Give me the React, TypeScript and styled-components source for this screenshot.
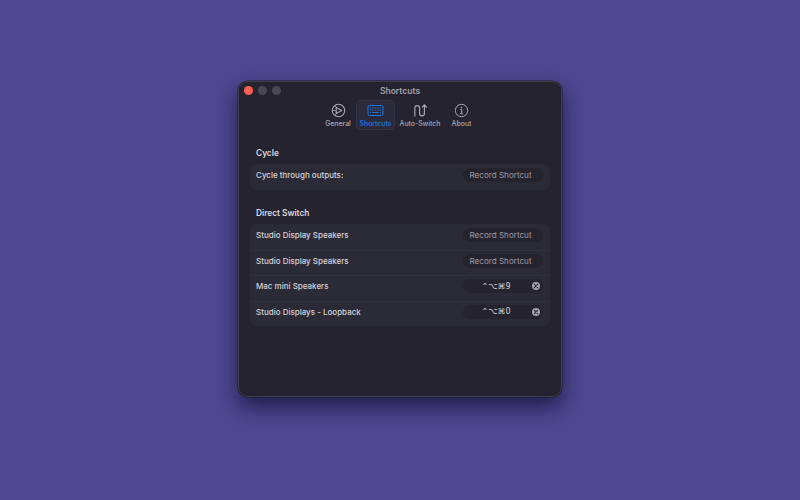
import React from "react";
import styled, { createGlobalStyle } from "styled-components";

const GlobalStyle = createGlobalStyle`
  html, body {
    margin: 0;
    padding: 0;
    height: 100%;
    background: #4e4890;
    font-family: "Inter", "Liberation Sans", sans-serif;
    -webkit-font-smoothing: antialiased;
  }
`;

const Desktop = styled.div`
  width: 800px;
  height: 500px;
  box-sizing: border-box;
  padding-top: 81px;
  display: flex;
  justify-content: center;
  align-items: flex-start;
  overflow: hidden;
`;

const Window = styled.div`
  width: 324px;
  height: 316px;
  box-sizing: border-box;
  border-radius: 10px;
  background: #24232f;
  border: 1px solid #3f3e49;
  box-shadow: 0 0 0 0.5px #1c1b26, 0 10px 22px rgba(20, 16, 60, 0.8);
  display: flex;
  flex-direction: column;
  overflow: hidden;
`;

const TitleBar = styled.div`
  position: relative;
  height: 18px;
  flex: none;
  display: flex;
  align-items: center;
  justify-content: center;
`;

const Lights = styled.div`
  position: absolute;
  left: 4.5px;
  top: 3.5px;
  display: flex;
  gap: 5px;
`;

const Light = styled.span<{ $color: string }>`
  width: 9px;
  height: 9px;
  border-radius: 50%;
  background: ${(p) => p.$color};
`;

const Title = styled.div`
  font-size: 8.5px;
  font-weight: 600;
  color: #a3a2aa;
`;

const Toolbar = styled.div`
  flex: none;
  height: 30px;
  padding-right: 2px;
  display: flex;
  justify-content: center;
`;

const Tab = styled.div<{ $active?: boolean; $w: number }>`
  width: ${(p) => p.$w}px;
  height: 30px;
  box-sizing: border-box;
  border-radius: 5px;
  padding-top: 3px;
  display: flex;
  flex-direction: column;
  align-items: center;
  gap: 0.5px;
  color: ${(p) => (p.$active ? "#1f78e0" : "#a8a7ae")};
  background: ${(p) => (p.$active ? "#2b2a3a" : "transparent")};
  box-shadow: ${(p) => (p.$active ? "inset 0 0 0 1px #353445" : "none")};
  svg {
    display: block;
  }
`;

const TabLabel = styled.span`
  font-size: 6.9px;
  font-weight: 500;
  line-height: 9px;
  white-space: nowrap;
`;

const Content = styled.div`
  padding: 0 11px;
  display: flex;
  flex-direction: column;
`;

const SectionTitle = styled.div<{ $top: number }>`
  margin-top: ${(p) => p.$top}px;
  padding-left: 6px;
  height: 22px;
  line-height: 22px;
  font-size: 8.3px;
  font-weight: 600;
  color: #dcdbe0;
`;

const Card = styled.div`
  background: #2b2a37;
  border-radius: 7px;
  display: flex;
  flex-direction: column;
`;

const Row = styled.div`
  height: 25.5px;
  box-sizing: border-box;
  padding: 0 7px 3.5px 6px;
  display: flex;
  align-items: center;
  justify-content: space-between;
  & + & {
    box-shadow: inset 0 1px 0 #32313e;
  }
`;

const RowLabel = styled.span`
  font-size: 8px;
  font-weight: 450;
  color: #d6d5da;
`;

const Pill = styled.div`
  position: relative;
  width: 80px;
  height: 14px;
  border-radius: 7px;
  background: #24232e;
  display: flex;
  align-items: center;
  justify-content: center;
`;

const PillText = styled.span<{ $keys?: boolean }>`
  font-size: ${(p) => (p.$keys ? "8px" : "8.1px")};
  color: ${(p) => (p.$keys ? "#d3d2d8" : "#9d9ca4")};
  font-family: ${(p) =>
    p.$keys ? '"DejaVu Sans", sans-serif' : '"Inter", sans-serif'};
  margin-right: ${(p) => (p.$keys ? "14px" : "5px")};
`;

const ClearButton = styled.span`
  position: absolute;
  right: 3px;
  top: 3px;
  width: 8px;
  height: 8px;
  border-radius: 50%;
  background: #a6a5ac;
  display: flex;
  align-items: center;
  justify-content: center;
`;

const GeneralIcon = () => (
  <svg width="15" height="15" viewBox="0 0 15 15" fill="none" stroke="currentColor" strokeWidth="1.1" strokeLinejoin="round">
    <circle cx="7.5" cy="7.5" r="6.2" />
    <path d="M5.2 4.6 L10.8 7.5 L5.2 10.4 Z" />
    <path d="M5.2 4.6 L4.2 2.4 M5.2 10.4 L4.2 12.6 M5.2 7.5 H1.6" strokeWidth="0.8" />
  </svg>
);

const KeyboardIcon = () => (
  <svg width="17" height="15" viewBox="0 0 17 15" fill="none" stroke="currentColor">
    <rect x="1" y="2.5" width="15" height="10" rx="1.5" strokeWidth="1" />
    <path d="M3 5h11M3 7.2h11" strokeWidth="1" strokeDasharray="1 .7" />
    <path d="M3 9.5h1M5.5 9.5h6M13 9.5h1" strokeWidth="1" />
  </svg>
);

const AutoSwitchIcon = () => (
  <svg width="15" height="15" viewBox="0 0 15 15" fill="none" stroke="currentColor" strokeWidth="1.2" strokeLinecap="round" strokeLinejoin="round">
    <path d="M1.8 13V5a2.4 2.4 0 0 1 4.8 0v5.4a2.4 2.4 0 0 0 4.8 0V2" />
    <path d="M9.4 4l2-2 2 2" />
  </svg>
);

const InfoIcon = () => (
  <svg width="15" height="15" viewBox="0 0 15 15" fill="none" stroke="currentColor" strokeWidth="1">
    <circle cx="7.5" cy="7.5" r="6.2" />
    <circle cx="7.5" cy="4.6" r="0.8" fill="currentColor" stroke="none" />
    <path d="M6.3 6.6h1.4v4M6.1 10.7h2.9" />
  </svg>
);

const ClearIcon = () => (
  <svg width="6" height="6" viewBox="0 0 6 6" stroke="#2b2a37" strokeWidth="1.1" strokeLinecap="round">
    <path d="M1.2 1.2l3.6 3.6M4.8 1.2L1.2 4.8" />
  </svg>
);

const RecordShortcut = () => (
  <Pill>
    <PillText>Record Shortcut</PillText>
  </Pill>
);

const KeyCombo = ({ keys }: { keys: string }) => (
  <Pill>
    <PillText $keys>{keys}</PillText>
    <ClearButton>
      <ClearIcon />
    </ClearButton>
  </Pill>
);

const App = () => {
  return (
    <Desktop>
      <GlobalStyle />
      <Window>
        <TitleBar>
          <Lights>
            <Light $color="#ff5f57" />
            <Light $color="#4a4953" />
            <Light $color="#4a4953" />
          </Lights>
          <Title>Shortcuts</Title>
        </TitleBar>
        <Toolbar>
          <Tab $w={36}>
            <GeneralIcon />
            <TabLabel>General</TabLabel>
          </Tab>
          <Tab $w={39} $active>
            <KeyboardIcon />
            <TabLabel>Shortcuts</TabLabel>
          </Tab>
          <Tab $w={50}>
            <AutoSwitchIcon />
            <TabLabel>Auto-Switch</TabLabel>
          </Tab>
          <Tab $w={33}>
            <InfoIcon />
            <TabLabel>About</TabLabel>
          </Tab>
        </Toolbar>
        <Content>
          <SectionTitle $top={12}>Cycle</SectionTitle>
          <Card>
            <Row>
              <RowLabel>Cycle through outputs:</RowLabel>
              <RecordShortcut />
            </Row>
          </Card>
          <SectionTitle $top={12.5}>Direct Switch</SectionTitle>
          <Card>
            <Row>
              <RowLabel>Studio Display Speakers</RowLabel>
              <RecordShortcut />
            </Row>
            <Row>
              <RowLabel>Studio Display Speakers</RowLabel>
              <RecordShortcut />
            </Row>
            <Row>
              <RowLabel>Mac mini Speakers</RowLabel>
              <KeyCombo keys="⌃⌥⌘9" />
            </Row>
            <Row>
              <RowLabel>Studio Displays - Loopback</RowLabel>
              <KeyCombo keys="⌃⌥⌘0" />
            </Row>
          </Card>
        </Content>
      </Window>
    </Desktop>
  );
};

export default App;
